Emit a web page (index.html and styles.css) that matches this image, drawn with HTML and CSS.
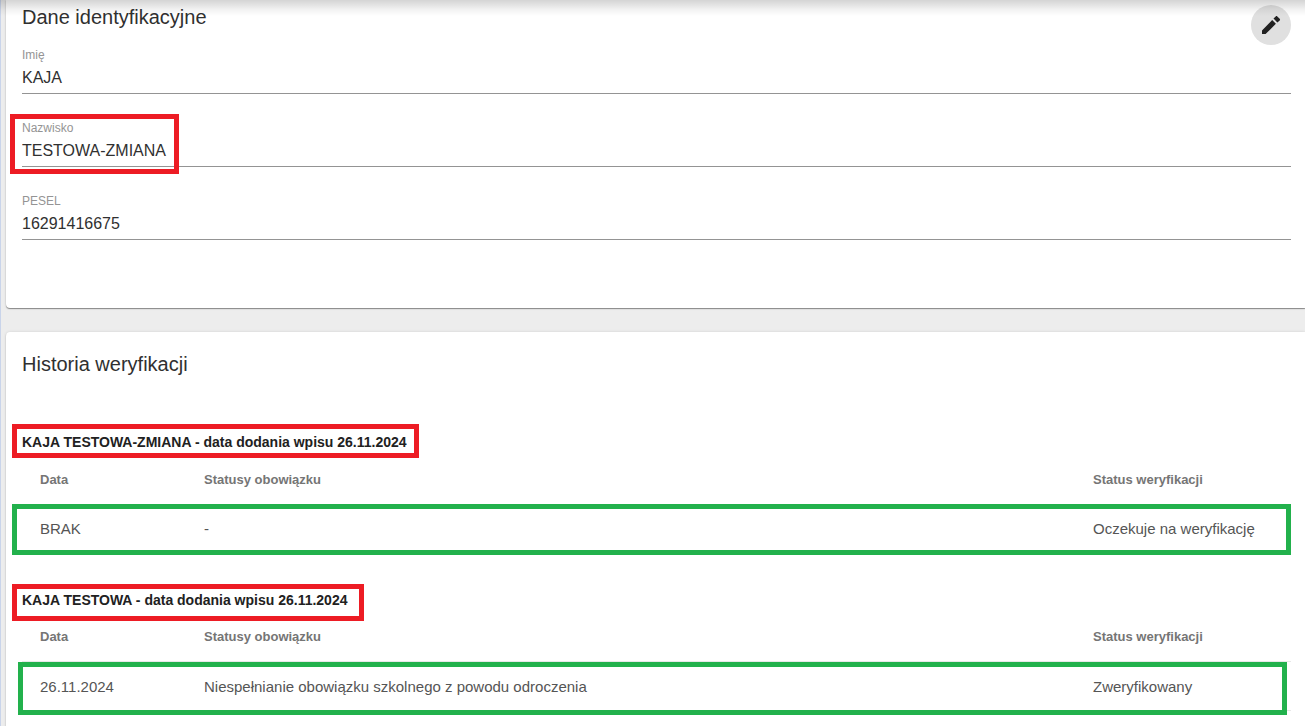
FILE: index.html
```html
<!DOCTYPE html>
<html lang="pl">

  <head>

    <meta charset="utf-8">
    <meta name="viewport" content="width=device-width, initial-scale=1">

    <title>Dane identyfikacyjne</title>

    <link rel="stylesheet" href="styles.css">

  </head>

  <body>
    <div class="top-shadow"></div>

    <main class="page">

      <section class="card card-data">
        <div class="card-header">
          <h2>Dane identyfikacyjne</h2>
          <button class="edit" type="button" aria-label="Edytuj">
            <svg width="24" height="24" viewBox="0 0 24 24" fill="currentColor">
              <path d="M3 17.4V21h3.6L16.9 10.8l-3.7-3.7L3 17.4zM20.7 7.4c.5-.5.5-1.1 0-1.6l-2.4-2.4c-.5-.5-1.1-.5-1.6 0l-2.2 2.2 3.9 3.9 2.3-2.1z"/>
            </svg>
          </button>
        </div>

        <div class="field">
          <label for="imie">Imię</label>
          <input id="imie" type="text" value="KAJA" readonly>
        </div>
        <div class="field mark mark-field">
          <label for="nazwisko">Nazwisko</label>
          <input id="nazwisko" type="text" value="TESTOWA-ZMIANA" readonly>
        </div>
        <div class="field">
          <label for="pesel">PESEL</label>
          <input id="pesel" type="text" value="16291416675" readonly>
        </div>
      </section>

      <section class="card card-history">
        <h2>Historia weryfikacji</h2>

        <div class="group">
          <h3 class="mark mark-title">KAJA TESTOWA-ZMIANA - data dodania wpisu 26.11.2024</h3>
          <div class="mark mark-row">
            <table>
              <thead>
                <tr>
                  <th class="col-date">Data</th>
                  <th>Statusy obowiązku</th>
                  <th class="col-status">Status weryfikacji</th>
                </tr>
              </thead>
              <tbody>
                <tr>
                  <td>BRAK</td>
                  <td>-</td>
                  <td>Oczekuje na weryfikację</td>
                </tr>
              </tbody>
            </table>
          </div>
        </div>

        <div class="group">
          <h3 class="mark mark-title mark-title-low">KAJA TESTOWA - data dodania wpisu 26.11.2024</h3>
          <div class="mark mark-row mark-row-inner">
            <table>
              <thead>
                <tr>
                  <th class="col-date">Data</th>
                  <th>Statusy obowiązku</th>
                  <th class="col-status">Status weryfikacji</th>
                </tr>
              </thead>
              <tbody>
                <tr>
                  <td>26.11.2024</td>
                  <td>Niespełnianie obowiązku szkolnego z powodu odroczenia</td>
                  <td>Zweryfikowany</td>
                </tr>
              </tbody>
            </table>
          </div>
        </div>
      </section>

    </main>
  </body>

</html>
```
FILE: styles.css
```css
*, *::after {
    box-sizing: border-box;
}
body {
    margin: 0;
    background-color: #ededed;
    color: #212121;
    font-family: "Liberation Sans", Arial, sans-serif;
    overflow: hidden;
}
.page {
    display: flex;
    flex-direction: column;
    gap: 24px;
    min-height: 100vh;
    padding-left: 5px;
    border-left: 1px solid #c9d4ea;
}
/* shadow of the toolbar above the content */
.top-shadow {
    position: absolute;
    z-index: 2;
    top: 0;
    left: 0;
    right: 0;
    height: 16px;
    background: linear-gradient(rgba(0, 0, 0, 0.17), rgba(0, 0, 0, 0.05) 60%, rgba(0, 0, 0, 0));
    pointer-events: none;
}

.card {
    padding: 0 14px 0 16px;
    background-color: #fff;
    border-radius: 4px 0 0 4px;
    box-shadow: 0 1px 1px rgba(0, 0, 0, 0.4), 0 0 3px rgba(0, 0, 0, 0.12);
}
.card-data {
    padding-top: 5px;
    padding-bottom: 68px;
    border-top-left-radius: 0;
}
.card-history {
    flex: 1;
    padding-top: 20px;
}
.card-header {
    display: flex;
    justify-content: space-between;
    align-items: flex-start;
    height: 40px;
}
h2 {
    margin: 0;
    color: #303030;
    font-size: 20px;
    font-weight: 400;
    line-height: 24px;
}
.edit {
    display: flex;
    justify-content: center;
    align-items: center;
    width: 40px;
    height: 40px;
    padding: 0;
    border: 0;
    border-radius: 50%;
    background-color: #e0e0e0;
    color: #212121;
}

.field {
    display: flex;
    flex-direction: column;
    height: 49px;
    margin-bottom: 24px;
    border-bottom: 1px solid #949494;
}
.field:last-child {
    margin-bottom: 0;
}
.field label {
    margin-top: 2px;
    color: #949494;
    font-size: 12px;
    line-height: 16px;
}
.field input {
    width: 100%;
    height: 30px;
    padding: 0;
    border: 0;
    outline: 0;
    background: none;
    color: #303030;
    font-family: inherit;
    font-size: 16px;
}

.group {
    margin-bottom: 36px;
}
h2 + .group {
    margin-top: 56px;
}
h3 {
    width: fit-content;
    margin: 0 0 3px;
    font-size: 14px;
    line-height: 20px;
}
table {
    width: 100%;
    border-collapse: collapse;
    table-layout: fixed;
}
th, td {
    height: 49px;
    padding: 0;
    border-bottom: 1px solid #e8e8e8;
    text-align: left;
}
th {
    color: #757575;
    font-size: 13px;
}
td {
    color: #555;
    font-size: 15px;
}
th:first-child, td:first-child {
    padding-left: 18px;
}
.col-date {
    width: 182px;
}
.col-status {
    width: 198px;
}

/* frames around the changed values */
.mark {
    position: relative;
}
.mark::after {
    content: "";
    position: absolute;
    border: 5px solid #ed1c24;
    pointer-events: none;
}
.mark-field::after {
    top: -4px;
    left: -12px;
    width: 169px;
    height: 60px;
}
.mark-title::after {
    top: -8px;
    bottom: -6px;
    left: -10px;
    right: -12px;
}
.mark-title-low::after {
    top: -6px;
    bottom: -11px;
    right: -17px;
}
.mark-row::after {
    bottom: -1px;
    left: -10px;
    right: 0;
    height: 51px;
    border-color: #22b14c;
}
.mark-row-inner::after {
    bottom: -4px;
    left: -4px;
    right: 4px;
    height: 53px;
}
```
